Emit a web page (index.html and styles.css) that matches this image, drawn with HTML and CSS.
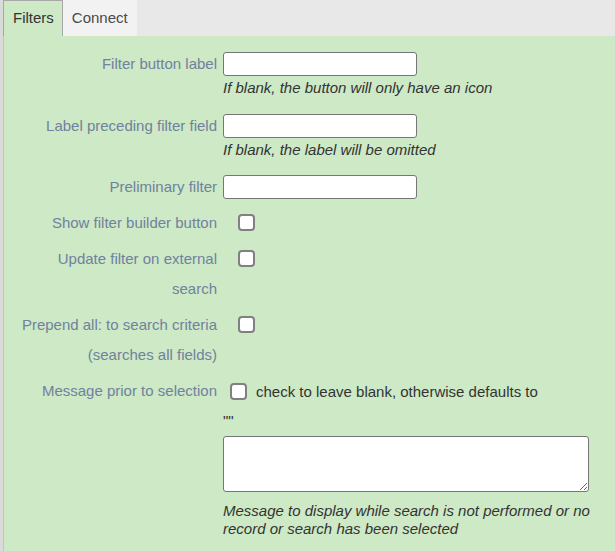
FILE: index.html
```html
<!DOCTYPE html>
<html lang="en">
<head>
<meta charset="utf-8">
<title>Filters</title>
<link rel="stylesheet" href="styles.css">
</head>
<body>
<div class="frame">
  <div class="tabs">
    <div class="tab active">Filters</div>
    <div class="tab">Connect</div>
  </div>
  <div class="panel">
    <div class="form">
      <label class="label">Filter button label</label>
      <div class="field">
        <input class="text" type="text">
        <div class="hint">If blank, the button will only have an icon</div>
      </div>

      <label class="label">Label preceding filter field</label>
      <div class="field">
        <input class="text" type="text">
        <div class="hint">If blank, the label will be omitted</div>
      </div>

      <label class="label">Preliminary filter</label>
      <div class="field">
        <input class="text" type="text">
      </div>

      <label class="label">Show filter builder button</label>
      <div class="field">
        <input class="check indent" type="checkbox">
      </div>

      <label class="label">Update filter on external search</label>
      <div class="field">
        <input class="check indent" type="checkbox">
      </div>

      <label class="label">Prepend all: to search criteria (searches all fields)</label>
      <div class="field">
        <input class="check indent" type="checkbox">
      </div>

      <label class="label">Message prior to selection</label>
      <div class="field">
        <div class="checkline">
          <input class="check near" type="checkbox">
          <span class="checktext">check to leave blank, otherwise defaults to</span>
        </div>
        <div class="quote">""</div>
        <textarea class="area"></textarea>
        <div class="hint">Message to display while search is not performed or no record or search has been selected</div>
      </div>
    </div>
  </div>
</div>
</body>
</html>
```

FILE: styles.css
```css
html, body {
  margin: 0;
  padding: 0;
  height: 100%;
}

body {
  font-family: "Liberation Sans", Arial, sans-serif;
  font-size: 15px;
  background: #e8e8e8;
  overflow: hidden;
}

.frame {
  display: flex;
  flex-direction: column;
  height: 100%;
  border-left: 3px solid #dadada;
  box-sizing: border-box;
}

.tabs {
  display: flex;
  height: 36px;
  background: #e8e8e8;
  flex: none;
}

.tab {
  height: 36px;
  box-sizing: border-box;
  padding: 9px 9px 0 9px;
  background: #f2f2f2;
  color: #4a4a4a;
  line-height: 17px;
}

.tab.active {
  background: #cde9c6;
  color: #333;
  border: 1px solid #a8a8a8;
  border-bottom: none;
  padding: 8px 8px 0 9px;
}

.panel {
  flex: 1;
  background: #cde9c6;
  border-left: 1px solid #bcc9b8;
}

.form {
  display: grid;
  grid-template-columns: 213px 1fr;
  column-gap: 6px;
  row-gap: 6px;
  padding: 13px 25px 0 0;
  align-items: start;
}

.label {
  color: #71819e;
  text-align: right;
  line-height: 30px;
  padding-left: 16px;
}

.field {
  display: flex;
  flex-direction: column;
  align-items: flex-start;
}

.text {
  width: 194px;
  height: 24px;
  box-sizing: border-box;
  margin: 3px 0;
  border: 1px solid #767676;
  border-radius: 3px;
  background: #fff;
  padding: 0 4px;
  font: inherit;
}

.hint {
  font-style: italic;
  color: #333;
  line-height: 17.5px;
  margin-bottom: 8px;
}

.check {
  appearance: none;
  -webkit-appearance: none;
  width: 17px;
  height: 17px;
  box-sizing: border-box;
  border: 2px solid #808080;
  border-radius: 4px;
  background: #fff;
  margin: 6px 0 7px 0;
}

.check.indent {
  margin-left: 15px;
}

.checkline {
  display: flex;
  align-items: center;
  height: 30px;
}

.check.near {
  margin: 0 9px 0 7px;
}

.checktext {
  color: #333;
}

.quote {
  color: #333;
  line-height: 30px;
  height: 30px;
}

.area {
  display: block;
  width: 366px;
  height: 56px;
  box-sizing: border-box;
  border: 1px solid #767676;
  border-radius: 3px;
  background: #fff;
  margin: 0 0 10px 0;
  font: inherit;
}
```
